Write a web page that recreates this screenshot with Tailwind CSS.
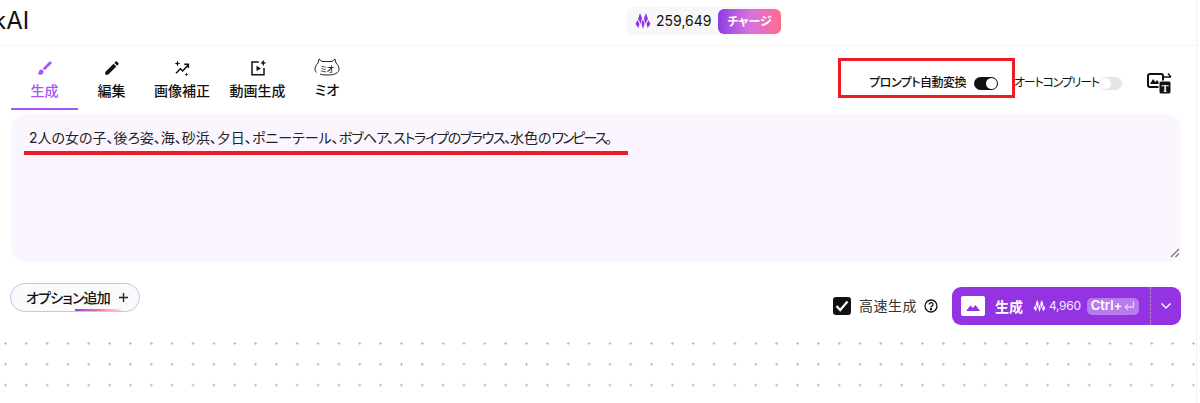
<!DOCTYPE html>
<html lang="ja">
<head>
<meta charset="UTF-8">
<script src="https://cdn.jsdelivr.net/npm/@tailwindcss/browser@4"></script>
<title>生成</title>
</head>
<body class="bg-white overflow-hidden font-['Inter','Noto_Sans_CJK_JP',sans-serif] text-[#111] [font-feature-settings:'palt']">
<div class="relative w-[1200px] h-[403px] overflow-hidden">

  <!-- header -->
  <header class="relative h-[46px] border-b border-[#f6f6f6] flex items-start">
    <div class="ml-[-7px] mt-[5px] text-[24px] leading-[32px] font-normal">kAI</div>
    <div class="absolute left-[626px] top-[7px] w-[155px] h-[28px] rounded-lg bg-[#f8f8f8] flex items-center pl-[9px]">
      <svg width="16" height="18" viewBox="0 0 16 18" fill="#9333ea"><path d="M5 1l2 5-1 6-3-5zM11 1L9 6l1 6 3-5zM8 7l1.500 5L8 17l-1.500-5zM2.500 8l2 4-1 4-3-4zM13.500 8l-2 4 1 4 3-4z"/></svg>
      <span class="ml-[5px] text-[14px] leading-[20px]">259,649</span>
      <div class="absolute right-0 top-[2px] w-[63px] h-[25px] rounded-md bg-gradient-to-r from-[#8f3be0] via-[#d96fe0] to-[#ff6b8a] text-white text-[12px] font-bold flex items-center justify-center">チャージ</div>
    </div>
  </header>

  <!-- tabs + toggles -->
  <div class="h-[68px] flex items-start">
    <nav class="ml-[11px] flex text-[14px] font-medium">
      <div class="w-[67px] h-[64px] border-b-2 border-[#a855f7] text-[#a855f7] flex flex-col items-center pt-[13px]">
        <svg width="18" height="18" viewBox="0 0 24 24" fill="#a855f7"><path d="M7 14c-1.700 0-3 1.300-3 3 0 1.300-1.200 2-2 2 .9 1.200 2.500 2 4 2 2.200 0 4-1.800 4-4 0-1.700-1.300-3-3-3zM20.700 4.600l-1.300-1.300a1 1 0 0 0-1.400 0L9 12.300l2.700 2.700 9-9a1 1 0 0 0 0-1.400z"/></svg>
        <span class="mt-[3px] leading-[22px]">生成</span>
      </div>
      <div class="w-[67px] flex flex-col items-center pt-[13px]">
        <svg width="18" height="18" viewBox="0 0 24 24" fill="#111"><path d="M3 17.250V21h3.750L17.800 9.940l-3.750-3.750zM20.700 7.040a1 1 0 0 0 0-1.410l-2.340-2.340a1 1 0 0 0-1.410 0l-1.830 1.830 3.750 3.750z"/></svg>
        <span class="mt-[3px] leading-[22px]">編集</span>
      </div>
      <div class="w-[74px] flex flex-col items-center pt-[13px]">
        <svg width="18" height="18" viewBox="0 0 24 24" fill="none" stroke="#111" stroke-width="2"><path d="M4 19l6-6 3 3 7-8M15 7h5.500v5"/><path d="M6 2l1 3 3 1-3 1-1 3-1-3-3-1 3-1zM18 18l.7 2 2 .7-2 .7-.7 2-.7-2-2-.7 2-.7z" fill="#111" stroke="none"/></svg>
        <span class="mt-[3px] leading-[22px]">画像補正</span>
      </div>
      <div class="w-[77px] flex flex-col items-center pt-[13px]">
        <svg width="18" height="18" viewBox="0 0 24 24" fill="none" stroke="#111" stroke-width="2"><path d="M13 4H4v17h16v-9"/><path d="M10 9l6 3.500-6 3.500z" fill="#111" stroke="none"/><path d="M19 1l1.200 3 2.800 1.200-2.800 1.100L19 9.500l-1.200-3.200L15 5.200 17.800 4z" fill="#111" stroke="none"/></svg>
        <span class="mt-[3px] leading-[22px]">動画生成</span>
      </div>
      <div class="w-[62px] flex flex-col items-center pt-[12px]">
        <div class="relative w-[26px] h-[19px]">
          <svg width="26" height="19" viewBox="0 0 26 19" fill="none" stroke="#222" stroke-width="1"><path d="M4 5L5 1l3 2.500h10L21 1l1 4M4 5c-2 2-3 4-3 6 0 1.500.5 2.500 1.500 3.500M22 5c2 2 3 4 3 6 0 4-4 6-12 6-3 0-5-.3-7-1"/></svg>
          <span class="absolute inset-0 flex items-center justify-center text-[8px] leading-none font-medium pt-[2px]">ミオ</span>
        </div>
        <span class="mt-[2px] leading-[22px]">ミオ</span>
      </div>
    </nav>
    <div class="ml-auto flex items-center pt-[26px]">
      <span class="text-[12px] leading-[18px] font-medium whitespace-nowrap tracking-[-0.500px]">プロンプト自動変換</span>
      <span class="ml-[8px] w-[24px] h-[13px] rounded-full bg-[#111] relative block">
        <span class="absolute right-[1px] top-[1px] w-[11px] h-[11px] rounded-full bg-white"></span>
      </span>
      <span class="ml-[16px] text-[12px] leading-[18px] w-[81px] whitespace-nowrap tracking-[-1.200px]">オートコンプリート</span>
      <span class="ml-[4px] w-[23px] h-[13px] rounded-full bg-[#e5e5e5] relative block">
        <span class="absolute left-[1px] top-[1px] w-[11px] h-[11px] rounded-full bg-white"></span>
      </span>
      <svg class="ml-[25px] mr-[28px]" width="25" height="22" viewBox="0 0 25 22">
        <rect x="1" y="2" width="15" height="13" rx="2" fill="#fff" stroke="#111" stroke-width="2"/>
        <path d="M3 12l3-5 2.500 3L10 8l3 4z" fill="#111"/>
        <rect x="12" y="9" width="12" height="13" rx="2" fill="#111" stroke="#fff"/>
        <text x="18" y="19.500" fill="#fff" font-size="10" font-weight="700" text-anchor="middle" font-family="Liberation Serif">T</text>
        <path d="M17 5h7M21 1.500L24 5" fill="none" stroke="#111" stroke-width="1.300"/>
      </svg>
    </div>
  </div>

  <!-- prompt -->
  <div class="relative ml-[11px] w-[1170px] h-[148px] rounded-[14px] bg-[#faf5ff] pl-[18px] pt-[13px] text-[14px] leading-[22px] text-[#222]">
    <p>2人の女の子、後ろ姿、海、砂浜、夕日、ポニーテール、<span class="tracking-[-0.800px]">ボブヘア、</span><span class="tracking-[-1.270px]">ストライプのブラウス、</span>水色の<span class="tracking-[-2px]">ワンピース。</span></p>
    <svg class="absolute right-[1px] bottom-[4px]" width="10" height="10" viewBox="0 0 10 10" stroke="#777" stroke-width="1.300"><path d="M1 9l8-8M5.500 9L9 5.500"/></svg>
  </div>

  <!-- actions -->
  <div class="relative h-[63px] flex items-start">
    <div class="absolute left-[10px] top-[21px] w-[130px] h-[29px] rounded-full border border-[#d9b8f3] bg-[#fafafa] flex items-center pl-[15px] overflow-hidden text-[14px] font-medium whitespace-nowrap">
      <span class="tracking-[-0.800px]">オプション追加</span>
      <svg class="ml-[8px]" width="11" height="11" viewBox="0 0 11 11" stroke="#222" stroke-width="1.400"><path d="M5.500 1v9M1 5.500h9"/></svg>
      <span class="absolute left-[64px] bottom-0 w-[46px] h-[2px] bg-gradient-to-r from-[#8f3be0] via-[#ef6fb0] to-[#ffd8e4]"></span>
    </div>
    <div class="ml-auto mr-[19px] mt-[25px] flex items-center">
      <span class="w-[18px] h-[18px] rounded-[3px] bg-[#111] flex items-center justify-center">
        <svg width="14" height="12" viewBox="0 0 14 12" fill="none" stroke="#fff" stroke-width="2.200"><path d="M1.500 6l3.700 4L12.500 1.500"/></svg>
      </span>
      <span class="ml-[8px] w-[58px] text-[14px] leading-[20px] text-[#333] whitespace-nowrap tracking-[0.500px]">高速生成</span>
      <svg class="ml-[7px] mr-[14px]" width="14" height="14" viewBox="0 0 14 14" fill="none" stroke="#111" stroke-width="1.300"><circle cx="7" cy="7" r="6"/><path d="M5.200 5.500a1.900 1.900 0 1 1 2.700 1.700c-.6.300-.9.600-.9 1.300"/><circle cx="7" cy="10.300" r=".6" fill="#111"/></svg>
      <div class="w-[229px] h-[38px] rounded-[9px] bg-[#9333e2] text-white flex items-center">
        <svg class="ml-[9px]" width="24" height="20" viewBox="0 0 24 20"><rect width="24" height="20" rx="2" fill="#fff"/><path d="M5 15l4.500-5.500L12 12l2.500-3L19 15z" fill="#9333e2"/></svg>
        <span class="ml-[10px] text-[14px] font-bold">生成</span>
        <svg class="ml-[10px]" width="13" height="14" viewBox="0 0 16 18" fill="#fff"><path d="M5 1l2 5-1 6-3-5zM11 1L9 6l1 6 3-5zM8 7l1.500 5L8 17l-1.500-5zM2.500 8l2 4-1 4-3-4zM13.500 8l-2 4 1 4 3-4z"/></svg>
        <span class="ml-[3px] text-[12px] text-white/90 w-[31px] tracking-[-0.300px]">4,960</span>
        <span class="ml-[7px] w-[52px] h-[17px] rounded-[5px] bg-white/35 flex items-center justify-center text-[13px] font-semibold whitespace-nowrap">Ctrl+<svg class="ml-[1px]" width="12" height="12" viewBox="0 0 11 11" fill="none" stroke="#fff" stroke-opacity=".7" stroke-width="1"><path d="M9.500 1v5.500H2M4.500 4L2 6.500 4.500 9"/></svg></span>
        <span class="ml-[11px] h-full border-l border-dotted border-white/50 flex-1 flex items-center justify-center">
          <svg width="12" height="8" viewBox="0 0 12 8" fill="none" stroke="#fff" stroke-width="1.400"><path d="M1.500 1.500L6 6l4.500-4.500"/></svg>
        </span>
      </div>
    </div>
  </div>

  <!-- dotted canvas -->
  <div class="h-[66px] bg-[radial-gradient(circle,#bdbdbd_1px,transparent_1.200px)] bg-[size:20.850px_20.850px] bg-[position:-5px_8px]"></div>

  <!-- annotations drawn over the screenshot -->
  <div class="absolute left-[838px] top-[58px] w-[177px] h-[40px] border-[3px] border-[#ed1c24]"></div>
  <div class="absolute left-[24px] top-[151px] w-[604px] h-[4px] bg-[#ed1c24]"></div>
  <div class="absolute right-[3px] top-0 bottom-0 w-px bg-[#f2f2f2]"></div>
</div>
</body>
</html>
